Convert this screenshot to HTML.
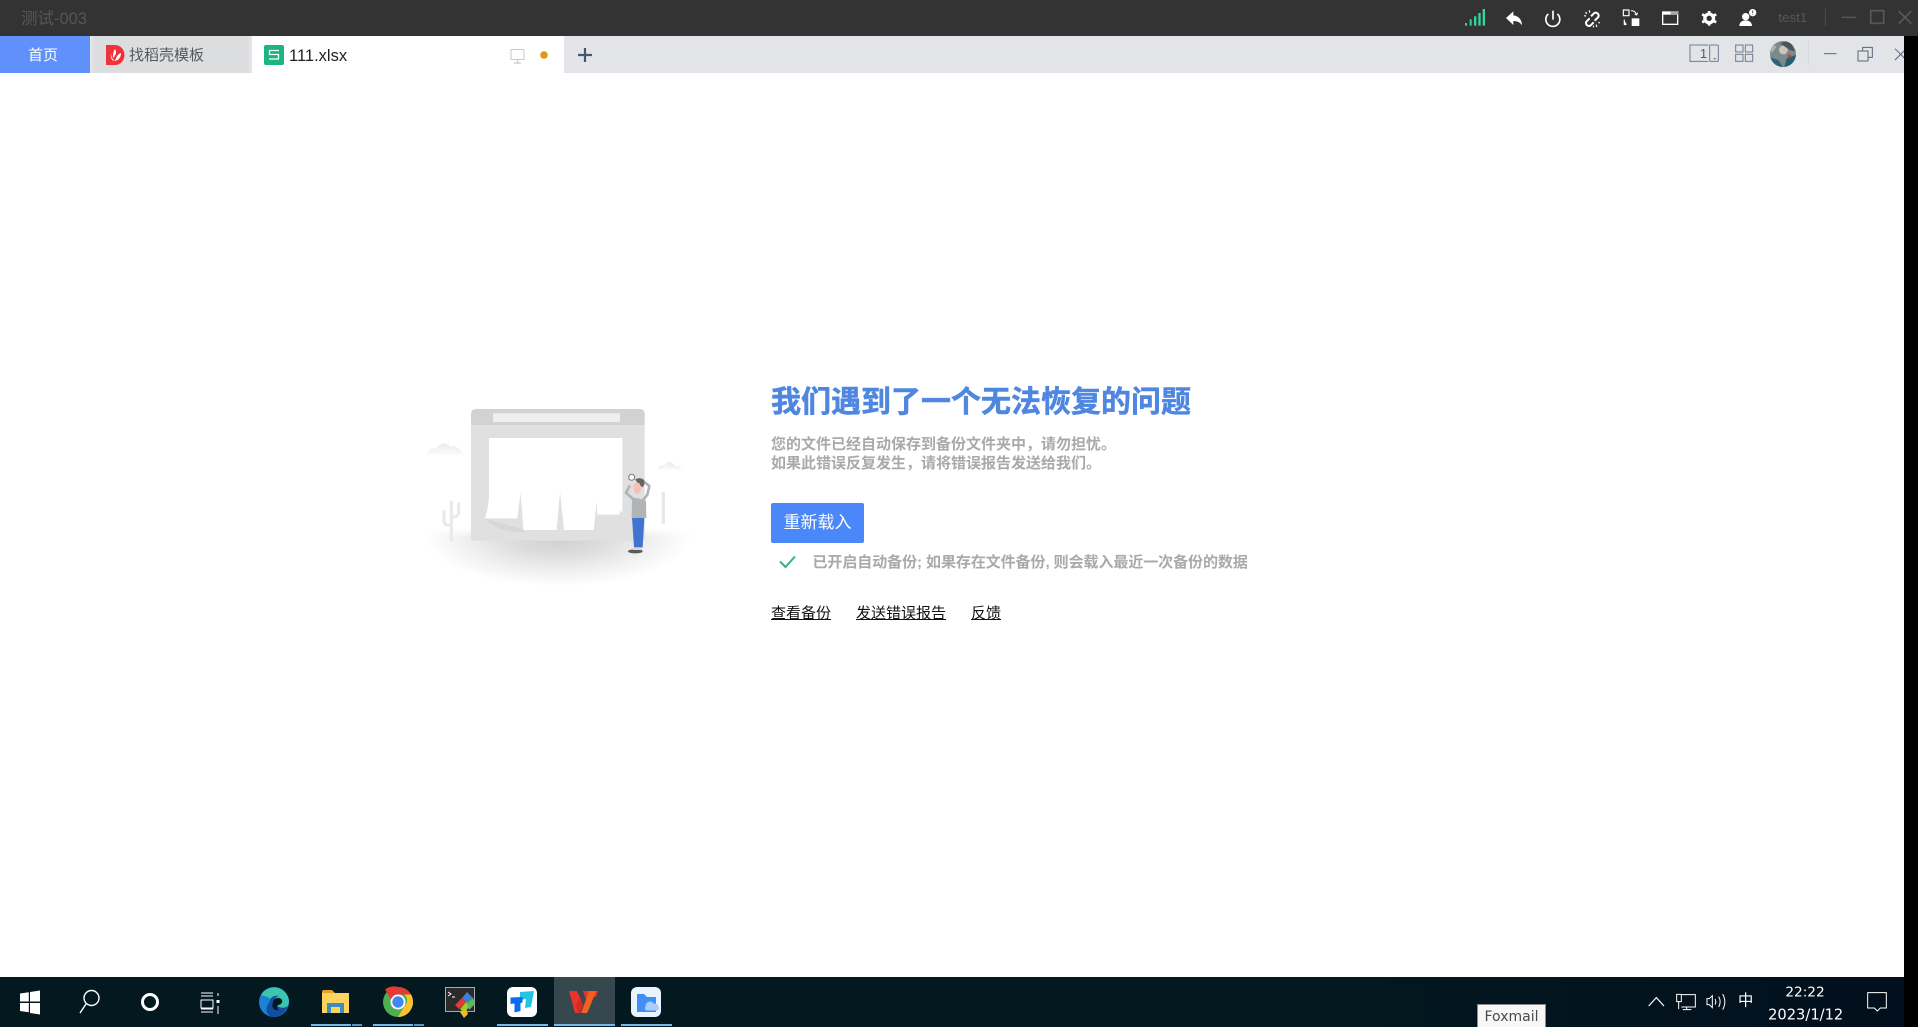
<!DOCTYPE html>
<html lang="zh-CN">
<head>
<meta charset="utf-8">
<title>测试-003</title>
<style>
html,body{margin:0;padding:0;width:1918px;height:1027px;overflow:hidden;background:#fff;font-family:"Liberation Sans","Noto Sans CJK SC",sans-serif}
.a{position:absolute;white-space:nowrap}
svg{position:absolute;display:block;overflow:hidden}
</style>
</head>
<body>
<div class="a" style="left:0;top:0;width:1918px;height:36px;background:#333"></div>
<div class="a" style="left:21px;top:9px;font-size:16.500px;line-height:20px;color:#565656">测试-003</div>

<div class="a" style="left:0;top:36px;width:1918px;height:37px;background:#e2e4e7"></div>
<div class="a" style="left:0;top:37px;width:86px;height:36px;color:#fff;font-size:15px;line-height:38px;text-align:center;z-index:2">首页</div>
<div class="a" style="left:0;top:36px;width:90px;height:37px;background:#5f90fb"></div>
<div class="a" style="left:93px;top:36px;width:156px;height:37px;background:#dcdddf"></div>
<div class="a" style="left:129px;top:37px;font-size:15px;line-height:38px;color:#555a60">找稻壳模板</div>
<div class="a" style="left:252px;top:36px;width:312px;height:37px;background:#fff"></div>
<div class="a" style="left:289px;top:37px;font-size:16.500px;line-height:38px;color:#222">111.xlsx</div>

<svg style="left:0;top:36px" width="640" height="37" viewBox="0 0 640 37">
  <path d="M106 9h9a9.500 10 0 0 1 0 20h-9z" fill="#ef3338"/>
  <path d="M115 13c2 3 1 6-2 9 0-3 0-6 2-9zM111 17c0 3 1 6 4 8-3 0-5-3-4-8zM121 17c0 4-2 7-6 8 1-4 3-7 6-8z" fill="#fff"/>
  <rect x="264" y="9" width="20" height="20" rx="2" fill="#1cb57f"/>
  <path d="M279 14.500h-9.500v4h9v4.500h-9.500" fill="none" stroke="#fff" stroke-width="1.300"/>
  <path d="M511 13.500h13v10h-13z" fill="#fff" stroke="#c6cace" stroke-width="1"/>
  <path d="M517.500 23.500v3M514 27h7" stroke="#c6cace" stroke-width="1.200"/>
  <circle cx="544" cy="19" r="3.800" fill="#e09a12"/>
  <path d="M585 12v14M578 19h14" stroke="#48566a" stroke-width="2.200"/>
</svg>

<!-- top right icons -->
<svg style="left:1460px;top:4px" width="240" height="30" viewBox="0 0 720 90">
  <g fill="#33d79b">
    <rect x="15" y="57" width="6" height="8"/>
    <rect x="29" y="46" width="6" height="19"/>
    <rect x="42" y="37" width="7" height="28"/>
    <rect x="55" y="27" width="7" height="38"/>
    <rect x="68" y="15" width="7" height="50"/>
  </g>
  <path d="M138 42L160 22v12c14 1 26 12 26 30-6-9-14-13-26-13v12z" fill="#fff"/>
  <path d="M265 30a21 21 0 1 0 27 0M279 20v27" fill="none" stroke="#fff" stroke-width="5"/>
  <g fill="none" stroke="#fff" stroke-width="6">
    <path d="M393 37l10-10a9 9 0 0 1 12 12l-11 11M401 55l-10 10a9 9 0 0 1-12-12l10-10"/>
  </g>
  <path d="M408 62l3 7M400 65l1 5M415 55l5 2M377 24l3 6M388 19l1 7M372 35l6 1" fill="none" stroke="#fff" stroke-width="3.500"/>
  <path d="M490 18h17v17h-17zM493 47v14h7" fill="none" stroke="#fff" stroke-width="3.500"/>
  <path d="M515 43h23v23h-23z" fill="#fff"/>
  <path d="M513 20c8 0 14 4 16 11M524 30l6 3 3-7M492 52l6 8-5 3" fill="none" stroke="#fff" stroke-width="3"/>
  <path d="M608 24h45v37h-45z" fill="none" stroke="#fff" stroke-width="4"/>
  <path d="M608 24h45v8h-45z" fill="#fff"/>
  <path d="M632 22h23v10h-23z" fill="#aaa"/>
</svg>
<svg style="left:1440px;top:0" width="478" height="80" viewBox="0 0 1434 240">
  <!-- gear -->
  <circle cx="807.500" cy="55" r="13" fill="none" stroke="#fff" stroke-width="10"/>
  <g stroke="#fff" stroke-width="8">
    <path d="M807.500 33v44M786.500 43l42 24M786.500 67l42-24"/>
  </g>
  <circle cx="807.500" cy="55" r="8" fill="#333"/>
  <circle cx="917" cy="50" r="11" fill="#fff"/>
  <path d="M898 78c0-12 9-17 19-17s19 5 19 17z" fill="#fff"/>
  <circle cx="938" cy="38" r="11" fill="#fff"/>
  <path d="M938 32v7M938 42v2" stroke="#333" stroke-width="2.500"/>
  <text x="1015" y="66" font-family="'Liberation Sans',sans-serif" font-size="40" fill="#575757">test1</text>
  <path d="M1156 26v52" stroke="#4d4d4d" stroke-width="3"/>
  <path d="M1205 52h43" stroke="#585858" stroke-width="4"/>
  <path d="M1292 32h39v38h-39z" fill="none" stroke="#585858" stroke-width="5"/>
  <path d="M1376 33l38 38M1414 33l-38 38" stroke="#585858" stroke-width="5"/>
  <!-- second row -->
  <g fill="none" stroke="#6e7d90" stroke-width="3">
    <path d="M805 135h-55v49h55"/>
    <rect x="809" y="135" width="26" height="49" rx="2"/>
    <rect x="887" y="135" width="22" height="21"/>
    <rect x="916" y="135" width="22" height="21"/>
    <rect x="887" y="163" width="22" height="21"/>
    <rect x="916" y="163" width="22" height="21"/>
  </g>
  <path d="M821 176h6" stroke="#555" stroke-width="3"/>
  <text x="780" y="174" font-family="'Liberation Sans',sans-serif" font-size="38" fill="#4e5a68">1</text>
  <clipPath id="av"><circle cx="1029" cy="162" r="39"/></clipPath>
  <g clip-path="url(#av)">
    <rect x="985" y="120" width="90" height="85" fill="#7d8a8c"/>
    <path d="M985 170l30 10 20 30h-50z" fill="#2d6378"/>
    <path d="M1040 175l40-15v50h-50z" fill="#2a5f70"/>
    <circle cx="1030" cy="150" r="13" fill="#cfc4bd"/>
    <path d="M1020 130l30-10 15 35-15-5z" fill="#4c5458"/>
    <circle cx="1048" cy="168" r="5" fill="#b34a3c"/>
    <path d="M990 130l20 10-15 20z" fill="#a9b2b2"/>
  </g>
  <path d="M1105 124v72" stroke="#d3d6d9" stroke-width="3"/>
  <path d="M1152 161h37" stroke="#56667a" stroke-width="3"/>
  <path d="M1254 153h30v30h-30zM1268 153v-11h29v30h-13" fill="none" stroke="#56667a" stroke-width="3"/>
  <path d="M1365 146l34 34M1399 146l-34 34" stroke="#56667a" stroke-width="3"/>
</svg>

<!-- illustration -->
<svg style="left:410px;top:390px" width="290" height="200" viewBox="0 0 870 600">
  <defs>
    <radialGradient id="sh" gradientUnits="userSpaceOnUse" cx="0" cy="0" r="1" gradientTransform="translate(445 440) scale(400 150)">
      <stop offset="0" stop-color="#cfcfcf"/><stop offset=".35" stop-color="#dcdcdc"/><stop offset=".7" stop-color="#f0f0f0"/><stop offset="1" stop-color="#fff"/>
    </radialGradient>
    <linearGradient id="fd" x1="0" x2="0" y1="0" y2="1">
      <stop offset="0" stop-color="#ebebeb"/><stop offset="1" stop-color="#fbfbfb"/>
    </linearGradient>
    <linearGradient id="topf" x1="0" x2="0" y1="0" y2="1">
      <stop offset="0" stop-color="#fff" stop-opacity="1"/><stop offset=".14" stop-color="#fff" stop-opacity="0"/>
    </linearGradient>
  </defs>
  <rect x="40" y="415" width="810" height="180" fill="url(#sh)"/>
  <rect x="40" y="415" width="810" height="180" fill="url(#topf)"/>
  <path d="M50 195c2-15 16-24 30-20 6-14 32-24 40-4 16-8 32 6 42 24z" fill="url(#fd)"/>
  <path d="M740 238c4-10 14-14 24-12 6-12 24-14 30 2 10-2 18 2 24 12z" fill="url(#fd)"/>
  <path d="M124 455V332M102 360v34c0 8 8 12 22 12M146 338v30c0 8-8 14-22 14" fill="none" stroke="#e9e9e9" stroke-width="9"/>
  <path d="M760 305v96" stroke="#e8e8e8" stroke-width="10"/>
  <path d="M183 73q0-16 16-16h489q16 0 16 16v379H183z" fill="#e0e0e0"/>
  <path d="M183 73q0-16 16-16h489q16 0 16 16v32H183z" fill="#d1d2d2"/>
  <rect x="249" y="70" width="381" height="26" fill="#eef0f0"/>
  <path d="M224 385q40 42 116 42v-8z" fill="#d6d6d6"/>
  <path d="M237 144H637V372l-5-12-4 14H562l-2-40-9 86H462L450 306l-10 114H340L332 308l-10 77H224Q238 350 237 300z" fill="#fff"/>
  <!-- person -->
  <ellipse cx="676" cy="484" rx="22" ry="6" fill="#5a5a5a"/>
  <path d="M666 382h37l-5 90h-26z" fill="#3f74d0"/>
  <path d="M668 474h28v6h-28z" fill="#e9d0cc"/>
  <path d="M666 322l22 4 20 6 1 52h-44z" fill="#b0b4b6"/>
  <path d="M698 272l20 16-6 26-14 18M660 286l-12 22 22 20" fill="none" stroke="#b0b4b6" stroke-width="8"/>
  <ellipse cx="682" cy="294" rx="12" ry="17" fill="#f4c0b6"/>
  <path d="M676 268q14-8 26 2q4 12-4 22q-8-4-9-12q-8 0-13-12z" fill="#666"/>
  <circle cx="665" cy="262" r="9" fill="#fff" stroke="#858585" stroke-width="3.500"/>
</svg>

<!-- text -->
<div class="a" style="left:771px;top:382px;font-size:30px;line-height:42px;font-weight:700;color:#4f87e0;-webkit-text-stroke:.5px #4f87e0">我们遇到了一个无法恢复的问题</div>
<div class="a" style="left:771px;top:435px;font-size:15px;line-height:19px;font-weight:700;color:#a9a9a9">您的文件已经自动保存到备份文件夹中，请勿担忧。<br>如果此错误反复发生，请将错误报告发送给我们。</div>
<div class="a" style="left:771px;top:503px;width:93px;height:40px;background:#4a87f8;border-radius:2px;color:#fff;font-size:17px;line-height:40px;text-align:center">重新载入</div>
<svg style="left:778px;top:554px" width="20" height="16" viewBox="0 0 20 16"><path d="M2 7.500l5.500 5.500L17 2.500" fill="none" stroke="#34b27a" stroke-width="2"/></svg>
<div class="a" style="left:812.500px;top:553px;font-size:15px;line-height:20px;font-weight:700;color:#a9a9a9;letter-spacing:-.07px">已开启自动备份; 如果存在文件备份, 则会载入最近一次备份的数据</div>
<div class="a" style="left:771px;top:604px;font-size:15px;line-height:20px;color:#111;text-decoration:underline">查看备份</div>
<div class="a" style="left:856px;top:604px;font-size:15px;line-height:20px;color:#111;text-decoration:underline">发送错误报告</div>
<div class="a" style="left:971px;top:604px;font-size:15px;line-height:20px;color:#111;text-decoration:underline">反馈</div>

<!-- taskbar -->
<div class="a" style="left:0;top:977px;width:1918px;height:50px;background:linear-gradient(90deg,#03181f 0,#03181f 70%,#020f1e 100%)"></div>
<div class="a" style="left:554px;top:977px;width:61px;height:47px;background:#36474e"></div>
<svg style="left:0;top:977px" width="1470" height="50" viewBox="0 977 1470 50">
  <path d="M20 993.500l8.800-1.300v9.300H20zM30 992l10-1.500v11H30zM20 1003h8.800v9.300l-8.800-1.300zM30 1003h10v11.500l-10-1.500z" fill="#fff"/>
  <circle cx="91.500" cy="998" r="7.500" fill="none" stroke="#fff" stroke-width="1.400"/>
  <path d="M86 1004l-6 9" stroke="#fff" stroke-width="1.400"/>
  <circle cx="150" cy="1002" r="7.500" fill="none" stroke="#fff" stroke-width="3"/>
  <path d="M201 993h12M201 996h12M201 1000h12v8h-12zM201 1012h12M201 1009h12M218 993v3M218 1006v8" stroke="#fff" stroke-width="1" fill="none"/>
  <rect x="216.500" y="1000" width="3" height="3" fill="#fff"/>
  <!-- edge -->
  <circle cx="274" cy="1002" r="15" fill="#1b82d6"/>
  <path d="M261 995a15 15 0 0 1 28 6c0 5-3 8-9 8-4 0-6-2-5-5-3-5-8-8-14-9z" fill="#38c6b0"/>
  <path d="M269 1003c1-6 5-8 10-7-4 1-5 4-3 8 2 4 8 5 12 2-2 6-8 11-14 11-7 0-10-8-5-14z" fill="#114f9e"/>
  <path d="M273 1003a5 5 0 0 1 9-3c1 2-1 5-4 5-2 2-1 4 1 5-5 1-8-3-6-7z" fill="#03181f"/>
  <!-- explorer -->
  <path d="M322 992q0-2 2-2h8l3 3h-13z" fill="#e7a020"/>
  <path d="M322 993h27v20h-27z" fill="#fbd35e"/>
  <path d="M327 1013v-10h17v10h-4v-6h-9v6z" fill="#3c8cc4"/>
  <!-- chrome -->
  <circle cx="398" cy="1002" r="15" fill="#4caf50"/>
  <path d="M398 987a15 15 0 0 1 13 7.500h-13a7.500 7.500 0 0 0-7 5l-6-10a15 15 0 0 1 13-2.500z" fill="#e53935"/>
  <path d="M411 994.500a15 15 0 0 1-13 22.500l6.500-11a7.500 7.500 0 0 0 0-11.500z" fill="#fbc02d"/>
  <circle cx="398" cy="1002" r="7.500" fill="#fff"/>
  <circle cx="398" cy="1002" r="5.700" fill="#4285f4"/>
  <!-- app -->
  <rect x="445.500" y="987.500" width="29" height="24" fill="#2b2b2b" stroke="#aaa" stroke-width="1"/>
  <path d="M448 992l3 2-3 2M452 997h3" stroke="#fff" fill="none" stroke-width="1"/>
  <path d="M455 1005l7-7 4 4-7 7z" fill="#e53935"/>
  <path d="M462 998l5-6 6 6-6 5z" fill="#3f7fd4"/>
  <path d="M460 1009l6-7 4 4-6 7z" fill="#9acd32"/>
  <path d="M467 1003l6-5 2 6-6 6z" fill="#5cb85c"/>
  <path d="M460 1012l6-3 2 5-4 4z" fill="#e8c020"/>
  <!-- todesk -->
  <rect x="507" y="987" width="30" height="30" rx="6" fill="#fff"/>
  <path d="M520 992l14-1-3 16-6 1 1-9-6 1z" fill="#26c4e4"/>
  <path d="M510.500 997.500l12-.5v5.500l-2 .5v8l-6 1.500v-9l-4 .5z" fill="#0b6bf0"/>
  <!-- wps -->
  <path d="M569 991h8l6 14-3 8h-5z" fill="#e8352b"/>
  <path d="M583 991h15l-2 6h-9l-1 3z" fill="#e8352b"/>
  <path d="M589 991h7l-7 18-2 4h-6l3-8z" fill="#f0621f"/>
  <path d="M576 1006l4-10 3 9-3 8h-2z" fill="#d42a22"/>
  <!-- cloud folder -->
  <rect x="631" y="987" width="30" height="30" rx="6" fill="#eaf4ff"/>
  <path d="M637 994h7l3 3h9v15h-19z" fill="#3f90f2"/>
  <circle cx="650" cy="1006" r="4.500" fill="#a9cff8"/>
  <circle cx="655" cy="1007" r="3.500" fill="#a9cff8"/>
  <rect x="645" y="1006" width="14" height="4.500" rx="2" fill="#a9cff8"/>
  <!-- underlines -->
  <g fill="#76b9ed">
    <rect x="311" y="1024" width="40" height="2"/><rect x="352" y="1024" width="10" height="2" fill="#5d93bd"/>
    <rect x="373" y="1024" width="40" height="2"/><rect x="414" y="1024" width="10" height="2" fill="#5d93bd"/>
    <rect x="497" y="1024" width="51" height="2"/>
    <rect x="554" y="1024" width="61" height="2"/>
    <rect x="621" y="1024" width="51" height="2"/>
  </g>
</svg>

<svg style="left:1460px;top:970px" width="458" height="57" viewBox="0 0 1374 171">
  <path d="M566 108l23-25 23 25" fill="none" stroke="#fff" stroke-width="3.500"/>
  <path d="M664 74h42v37h-42" fill="none" stroke="#fff" stroke-width="3"/>
  <path d="M650 73h14v22h-14zM656 95v22M680 111v7M668 119h26" fill="none" stroke="#fff" stroke-width="3"/>
  <path d="M741 86h7l9-9v36l-9-9h-7z" fill="none" stroke="#fff" stroke-width="3"/>
  <path d="M765 87q5 8 0 17M776 80q9 15 0 31M788 72q13 24 0 47" fill="none" stroke="#fff" stroke-width="3"/>
  <text x="857" y="106" text-anchor="middle" font-family="'Noto Sans CJK SC',sans-serif" font-size="46" fill="#fff">中</text>
  <text x="1035" y="79" text-anchor="middle" font-family="'DejaVu Sans',sans-serif" font-size="41" fill="#fff">22:22</text>
  <text x="1037" y="148" text-anchor="middle" font-family="'DejaVu Sans',sans-serif" font-size="44" fill="#fff">2023/1/12</text>
  <path d="M1223 68h56v46h-18l-9 9-9-9h-20z" fill="none" stroke="#fff" stroke-width="3"/>
</svg>

<div class="a" style="left:1477px;top:1004px;width:69px;height:23px;background:#f7f7f7;border:1px solid #8a8a8a;border-bottom:0;box-sizing:border-box;font-family:'DejaVu Sans',sans-serif;font-size:14px;line-height:25px;color:#4a4a4a;text-align:center">Foxmail</div>

<div class="a" style="left:1904px;top:36px;width:14px;height:991px;background:#000"></div>
</body>
</html>
